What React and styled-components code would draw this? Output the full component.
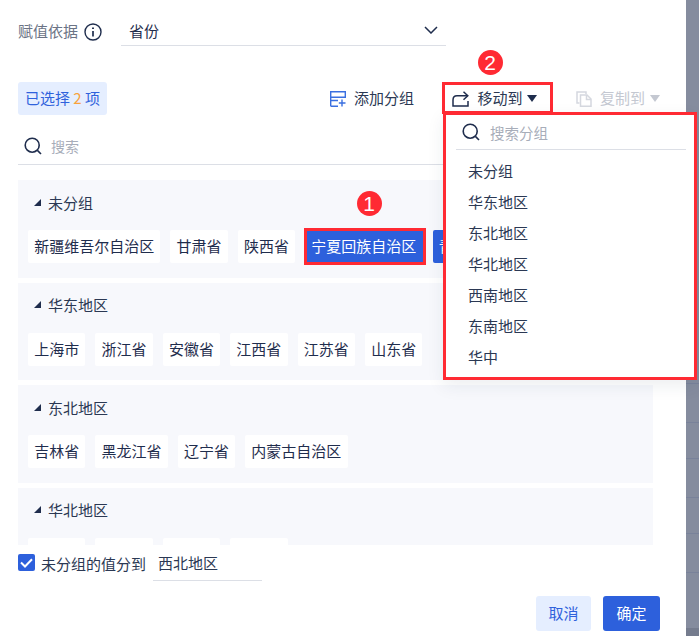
import styled, { createGlobalStyle } from "styled-components";

const GlobalStyle = createGlobalStyle`
  html, body {
    margin: 0;
    padding: 0;
    background: #fff;
  }
  body {
    font-family: "Noto Sans CJK SC", "Liberation Sans", sans-serif;
    color: #1f2d4d;
  }
`;

const Page = styled.div`
  position: relative;
  display: flex;
  width: 699px;
  height: 636px;
  overflow: hidden;
`;

const Dialog = styled.div`
  display: flex;
  flex-direction: column;
  width: 686px;
  height: 636px;
  padding: 17px 26px 0 18px;
  box-sizing: border-box;
  background: #fff;
`;

const Backdrop = styled.div`
  display: flex;
  flex-direction: column;
  width: 13px;
  height: 636px;
  padding-top: 383px;
  box-sizing: border-box;
  background: #858c9e;
`;

const BackdropRow = styled.div`
  height: ${(p) => p.$h}px;
  border-top: 1px solid #79829a;
  box-sizing: border-box;
`;

const BackdropEnd = styled.div`
  flex: 1;
  margin-top: 20px;
  background: #757c8e;
`;

const FieldRow = styled.div`
  display: flex;
  align-items: center;
  height: 29px;
`;

const FieldLabel = styled.span`
  font-size: 15px;
  line-height: 27px;
  height: 29px;
  color: #6b7385;
`;

const InfoIcon = styled.svg`
  width: 18px;
  height: 18px;
  margin-left: 6px;
  color: #1f2d4d;
`;

const Select = styled.div`
  display: flex;
  align-items: center;
  justify-content: space-between;
  width: 325px;
  height: 29px;
  margin-left: 19px;
  padding: 0 8px 2px;
  box-sizing: border-box;
  border-bottom: 1px solid #dcdfe6;
  font-size: 15px;
`;

const Toolbar = styled.div`
  display: flex;
  align-items: center;
  height: 33px;
  margin-top: 36px;
`;

const SelectedTag = styled.div`
  width: 89px;
  height: 33px;
  border-radius: 3px;
  background: #e5eeff;
  color: #2f62dc;
  font-size: 15px;
  line-height: 31px;
  text-align: center;
  white-space: nowrap;
`;

const Count = styled.span`
  color: #f9a23b;
`;

const Actions = styled.div`
  display: flex;
  align-items: center;
  gap: 38.5px;
  margin-left: auto;
`;

const Action = styled.div`
  position: relative;
  display: flex;
  align-items: center;
  gap: 8px;
  font-size: 15px;
  line-height: 20px;
  white-space: nowrap;
  color: ${(p) => (p.$disabled ? "#c4c8d1" : "#2b3853")};

  ${(p) =>
    p.$marked &&
    `&::after {
      content: "";
      position: absolute;
      left: -10px;
      right: -16px;
      top: -7px;
      height: 32px;
      border: 3px solid #ff2a33;
      box-sizing: border-box;
    }`}
`;

const ActionText = styled.span`
  position: relative;
  top: -1px;
`;

const Caret = styled.span`
  width: 0;
  height: 0;
  margin-left: -3px;
  border-left: 5px solid transparent;
  border-right: 5px solid transparent;
  border-top: 7px solid ${(p) => (p.$disabled ? "#c4c8d1" : "#1f2d4d")};
`;

const Search = styled.div`
  display: flex;
  align-items: center;
  gap: 9px;
  height: 37px;
  margin-top: 13px;
  padding-left: 6px;
  border-bottom: 1px solid #dcdfe6;
  font-size: 14px;
  color: #a7adb9;
  box-sizing: border-box;
`;

const GroupList = styled.div`
  display: flex;
  flex-direction: column;
  gap: 5px;
  width: 635px;
  height: 365px;
  margin-top: 15px;
  overflow: hidden;
  flex-shrink: 0;
`;

const Group = styled.section`
  flex-shrink: 0;
  height: 97.6px;
  padding: 11px 10px 0;
  box-sizing: border-box;
  background: #f7f8fc;
`;

const GroupTitle = styled.div`
  display: flex;
  align-items: center;
  gap: 7px;
  height: 22px;
  padding-left: 6px;
  font-size: 15px;
  color: #2b3853;
`;

const Chips = styled.div`
  display: flex;
  gap: 10px;
  margin-top: 17px;
`;

const Chip = styled.div`
  position: relative;
  flex-shrink: 0;
  min-width: 45px;
  height: 33px;
  padding: 0 6.2px;
  border-radius: ${(p) => (p.$marked ? 0 : 2)}px;
  background: ${(p) => (p.$active ? "#2d60dc" : "#fff")};
  color: ${(p) => (p.$active ? "#fff" : "#1f2d4d")};
  font-size: 15px;
  line-height: 31px;
  white-space: nowrap;

  ${(p) =>
    p.$marked &&
    `&::after {
      content: "";
      position: absolute;
      left: -1.2px;
      right: -3.4px;
      top: -2px;
      bottom: -2px;
      border: 3px solid #ff2a33;
      box-sizing: border-box;
    }`}
`;

const Footer = styled.div`
  display: flex;
  align-items: center;
  height: 36px;
`;

const Checkbox = styled.span`
  display: flex;
  align-items: center;
  justify-content: center;
  width: 17px;
  height: 17px;
  margin-top: -1px;
  border-radius: 2px;
  background: #2d60dc;
`;

const CheckLabel = styled.span`
  margin-left: 6px;
  font-size: 15px;
  color: #2b3853;
`;

const ValueField = styled.div`
  width: 109px;
  height: 35px;
  margin-left: 7px;
  padding-left: 5px;
  box-sizing: border-box;
  border-bottom: 1px solid #dcdfe6;
  font-size: 15px;
  line-height: 34px;
  color: #2b3853;
`;

const Buttons = styled.div`
  display: flex;
  justify-content: flex-end;
  gap: 12px;
  margin-top: 15px;
`;

const Button = styled.button`
  width: ${(p) => (p.$primary ? 57 : 55)}px;
  height: 35px;
  padding: 0 0 2px;
  border: none;
  border-radius: 3px;
  background: ${(p) => (p.$primary ? "#2d60dc" : "#e5eeff")};
  color: ${(p) => (p.$primary ? "#fff" : "#2f62dc")};
  font-family: inherit;
  font-size: 15px;
`;

const Dropdown = styled.div`
  position: absolute;
  left: 443px;
  top: 112px;
  width: 254px;
  height: 268px;
  padding: 2px 8px 0 10px;
  box-sizing: border-box;
  border: 3px solid #ff2a33;
  background: #fff;
  box-shadow: 0 6px 16px rgba(31, 45, 77, 0.08);
`;

const DropdownSearch = styled.div`
  display: flex;
  align-items: center;
  gap: 10px;
  height: 30px;
  margin-bottom: 5px;
  padding: 0 0 2px 6px;
  border-bottom: 1px solid #dcdfe6;
  font-size: 14.5px;
  color: #a7adb9;
`;

const DropdownItem = styled.div`
  height: 31px;
  padding-left: 12px;
  font-size: 15px;
  line-height: 31px;
  color: #2b3853;
`;

const Badge = styled.div`
  position: absolute;
  left: ${(p) => p.$x - 12.5}px;
  top: ${(p) => p.$y - 12.5}px;
  width: 25px;
  height: 25px;
  border-radius: 50%;
  background: #ff2a33;
  color: #fff;
  font-family: "Liberation Sans", sans-serif;
  font-size: 21px;
  line-height: 25px;
  text-align: center;
`;

const SearchGlyph = () => (
  <svg width="18" height="18" viewBox="0 0 18 18" fill="none" stroke="#1f2d4d" strokeWidth="1.6">
    <circle cx="8.2" cy="8.2" r="7" />
    <path d="M13.4 13.4 L17 17" />
  </svg>
);

// the last group is cut off above its chip labels, so it only needs the empty chips
const groups = [
  { name: "未分组", chips: ["新疆维吾尔自治区", "甘肃省", "陕西省", "宁夏回族自治区", "青海省"] },
  { name: "华东地区", chips: ["上海市", "浙江省", "安徽省", "江西省", "江苏省", "山东省"] },
  { name: "东北地区", chips: ["吉林省", "黑龙江省", "辽宁省", "内蒙古自治区"] },
  { name: "华北地区", chips: ["", "", "", ""] },
];

const menuItems = ["未分组", "华东地区", "东北地区", "华北地区", "西南地区", "东南地区", "华中"];

const App = () => {
  return (
    <Page>
      <GlobalStyle />
      <Dialog>
        <FieldRow>
          <FieldLabel>赋值依据</FieldLabel>
          <InfoIcon viewBox="0 0 18 18" fill="none" stroke="currentColor" strokeWidth="1.4">
            <circle cx="9" cy="9" r="8" />
            <path d="M9 8 V13.5" strokeWidth="1.7" />
            <path d="M9 4.4 V6" strokeWidth="1.9" />
          </InfoIcon>
          <Select>
            省份
            <svg width="14" height="8" viewBox="0 0 14 8" fill="none" stroke="#1f2d4d" strokeWidth="1.5">
              <path d="M1 1 L7 7 L13 1" />
            </svg>
          </Select>
        </FieldRow>

        <Toolbar>
          <SelectedTag>
            已选择 <Count>2</Count> 项
          </SelectedTag>
          <Actions>
            <Action>
              <svg width="16" height="16" viewBox="0 0 16 16" fill="none" stroke="#3a6fe0" strokeWidth="1.4">
                <path d="M0.7 0.7 H15.3 V6.2 H0.7 Z" />
                <path d="M0.7 6.2 V9.5 H8 M0.7 15.3 H8 M0.7 9.5 V15.3" />
                <path d="M12 8.5 V15.5 M8.8 12 H15.5" />
              </svg>
              <ActionText>添加分组</ActionText>
            </Action>
            <Action $marked>
              <svg width="17" height="16" viewBox="0 0 17 16" fill="none" stroke="#1f2d4d" strokeWidth="1.5">
                <path d="M1 9 V15 H16 V10" />
                <path d="M1 9 C1 6 2.5 4.8 5 4.8 H15.5" />
                <path d="M11.5 0.8 L15.8 4.8 L11.5 8.8" />
              </svg>
              <ActionText>移动到</ActionText>
              <Caret />
            </Action>
            <Action $disabled>
              <svg width="16" height="16" viewBox="0 0 16 16" fill="none" stroke="#d5d8df" strokeWidth="1.5">
                <path d="M3.5 12 H1 V1 H10 V3" />
                <path d="M4.5 4 H11 L15 8 V15.2 H4.5 Z" />
                <path d="M10.5 4 V8.5 H15" />
              </svg>
              <ActionText>复制到</ActionText>
              <Caret $disabled />
            </Action>
          </Actions>
        </Toolbar>

        <Search>
          <SearchGlyph />
          搜索
        </Search>

        <GroupList>
          {groups.map((group, i) => (
            <Group key={group.name}>
              <GroupTitle>
                <svg width="7" height="7" viewBox="0 0 7 7">
                  <path d="M7 0 V7 H0 Z" fill="#1f2d4d" />
                </svg>
                {group.name}
              </GroupTitle>
              <Chips>
                {group.chips.map((chip, j) => (
                  <Chip key={j} $active={i === 0 && j >= 3} $marked={i === 0 && j === 3}>
                    {chip}
                  </Chip>
                ))}
              </Chips>
            </Group>
          ))}
        </GroupList>

        <Footer>
          <Checkbox>
            <svg width="13" height="10" viewBox="0 0 13 10" fill="none" stroke="#fff" strokeWidth="2">
              <path d="M1 4.5 L5 8.5 L12 1.2" />
            </svg>
          </Checkbox>
          <CheckLabel>未分组的值分到</CheckLabel>
          <ValueField>西北地区</ValueField>
        </Footer>

        <Buttons>
          <Button>取消</Button>
          <Button $primary>确定</Button>
        </Buttons>
      </Dialog>

      <Backdrop>
        <BackdropRow $h={39} />
        <BackdropRow $h={36} />
        <BackdropRow $h={39} />
        <BackdropRow $h={36} />
        <BackdropRow $h={39} />
        <BackdropRow $h={36} />
        <BackdropEnd />
      </Backdrop>

      <Dropdown>
        <DropdownSearch>
          <SearchGlyph />
          搜索分组
        </DropdownSearch>
        {menuItems.map((item) => (
          <DropdownItem key={item}>{item}</DropdownItem>
        ))}
      </Dropdown>

      <Badge $x={369} $y={203}>1</Badge>
      <Badge $x={490} $y={62}>2</Badge>
    </Page>
  );
};

export default App;
